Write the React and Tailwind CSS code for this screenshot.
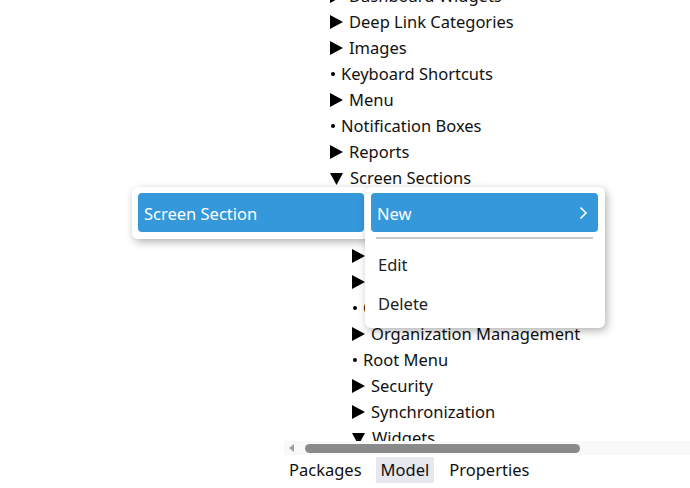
import React from 'react';

const font = { fontFamily: '"Noto Sans", "Open Sans", sans-serif' };

function Marker({ kind }) {
  if (kind === 'open') {
    return (
      <svg width="14" height="13" viewBox="0 0 14 13" className="mr-[6px] shrink-0">
        <polygon points="0,1 13,1 6.5,13" fill="#000" />
      </svg>
    );
  }
  if (kind === 'closed') {
    return (
      <svg width="13" height="14" viewBox="0 0 13 14" className="mr-[6px] shrink-0">
        <polygon points="0,0 13,7 0,14" fill="#000" />
      </svg>
    );
  }
  return <span className="mr-[6px] ml-[1px] inline-block w-[4px] h-[4px] rounded-full bg-black shrink-0" />;
}

function Row({ kind, label, level = 0 }) {
  return (
    <div className={`h-[26px] flex items-center ${level ? 'pl-[352px]' : 'pl-[330px]'}`}>
      <Marker kind={kind} />
      <span className="whitespace-nowrap">{label}</span>
    </div>
  );
}

const tree = [
  ['closed', 'Dashboard Widgets', 0],
  ['closed', 'Deep Link Categories', 0],
  ['closed', 'Images', 0],
  ['leaf', 'Keyboard Shortcuts', 0],
  ['closed', 'Menu', 0],
  ['leaf', 'Notification Boxes', 0],
  ['closed', 'Reports', 0],
  ['open', 'Screen Sections', 0],
  ['closed', 'Dashboard', 1],
  ['closed', 'Header', 1],
  ['closed', 'Licensing', 1],
  ['closed', 'Navigation', 1],
  ['leaf', 'Overview', 1],
  ['closed', 'Organization Management', 1],
  ['leaf', 'Root Menu', 1],
  ['closed', 'Security', 1],
  ['closed', 'Synchronization', 1],
  ['open', 'Widgets', 1],
];

export default function App() {
  return (
    <div className="relative w-[690px] h-[488px] bg-white text-[16.5px] text-[#111] flex flex-col overflow-hidden" style={font}>
      {/* tree */}
      <div className="h-[441px] overflow-hidden shrink-0">
        <div className="mt-[-17px]">
          {tree.map(([kind, label, level]) => (
            <Row key={label} kind={kind} label={label} level={level} />
          ))}
        </div>
      </div>

      {/* horizontal scrollbar */}
      <div className="h-[14px] ml-[284px] bg-[#f9f9f9] flex items-center shrink-0">
        <svg width="6" height="8" viewBox="0 0 6 8" className="ml-[5px]">
          <polygon points="5,0 0,4 5,8" fill="#a0a0a0" />
        </svg>
        <div className="ml-[10px] w-[275px] h-[9px] rounded-full bg-[#8a8a8a]" />
      </div>

      {/* tabs */}
      <div className="flex items-start pl-[289px] pt-[2px]">
        <div className="h-[26px] flex items-center pr-[14px]">Packages</div>
        <div className="h-[26px] flex items-center px-[5px] bg-[#e7e7ef]">Model</div>
        <div className="h-[26px] flex items-center pl-[15px]">Properties</div>
      </div>

      {/* context menu */}
      <div className="absolute left-[132px] top-[187px] w-[238px] h-[52px] bg-white rounded-[6px] shadow-[2px_3px_8px_rgba(0,0,0,0.3)] p-[6px]">
        <div className="h-[39px] rounded-[4px] bg-[#3498db] text-white flex items-center px-[6px] pt-[3px]">Screen Section</div>
      </div>
      <div className="absolute left-[365px] top-[187px] w-[240px] h-[141px] bg-white rounded-[6px] shadow-[2px_3px_8px_rgba(0,0,0,0.3)] pt-[6px] pl-[6px] pr-[7px] flex flex-col">
        <div className="h-[39px] rounded-[4px] bg-[#3498db] text-white flex items-center justify-between px-[6px]">
          <span className="pt-[3px]">New</span>
          <svg width="9" height="14" viewBox="0 0 9 14" className="mr-[4px]">
            <polyline points="1.5,1.5 7,7 1.5,12.5" fill="none" stroke="#fff" strokeWidth="1.6" />
          </svg>
        </div>
        <div className="mt-[5px] mx-[5px] h-[2px] bg-[#c8c8c8]" />
        <div className="h-[39px] flex items-center px-[7px] mt-[6px] pt-[2px] text-[#222]">Edit</div>
        <div className="h-[39px] flex items-center px-[7px] pt-[2px] text-[#222]">Delete</div>
      </div>
    </div>
  );
}
